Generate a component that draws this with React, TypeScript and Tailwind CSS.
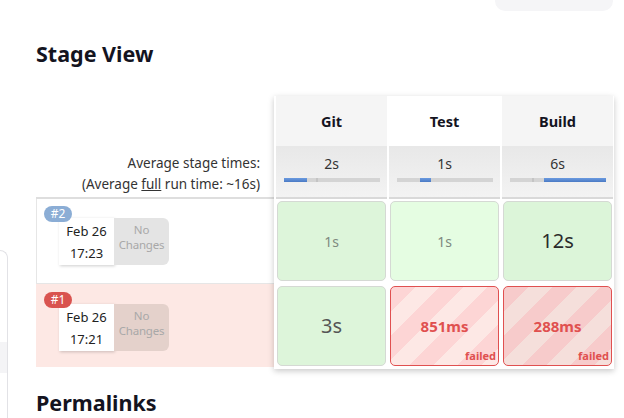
import React from "react";

const stageCols = [
  { name: "Git", avg: "2s", headerBg: "bg-[#f5f5f5]", track: { fill: [0, 23], tick: 32 } },
  { name: "Test", avg: "1s", headerBg: "bg-white", track: { fill: [23, 34], tick: -1 } },
  { name: "Build", avg: "6s", headerBg: "bg-[#f5f5f5]", track: { fill: [34, 96], tick: 22 } },
];

function Bar({ fill, tick }: { fill: number[]; tick: number }) {
  return (
    <div className="relative mx-auto mt-[4px] h-[4px] w-[96px] bg-[#d4d4d4]">
      {tick >= 0 && (
        <div className="absolute top-0 h-[4px] w-[2px] bg-[#c4c4c4]" style={{ left: tick }} />
      )}
      <div
        className="absolute top-0 h-[4px] bg-linear-to-b from-[#6b9be0] to-[#4a7ac4]"
        style={{ left: fill[0], width: fill[1] - fill[0] }}
      />
    </div>
  );
}

function RunLabel({ num, time, badge, changesBg }: { num: string; time: string; badge: string; changesBg: string }) {
  return (
    <div>
      <div className={`relative z-10 flex h-[16px] w-[28px] items-center justify-center rounded-full ${badge} text-[12px] leading-none text-white`}>
        {num}
      </div>
      <div className="-mt-[4px] ml-[15px] flex">
        <div className="flex h-[47px] w-[55px] flex-col justify-center bg-white text-center text-[13px] leading-[22px] text-[#222] shadow-[1px_1px_3px_rgba(0,0,0,0.2)]">
          <div>Feb 26</div>
          <div>{time}</div>
        </div>
        <div className={`h-[47px] w-[55px] rounded-r-[6px] ${changesBg} pt-[4px] text-center text-[11.5px] leading-[15px] tracking-[-0.2px] text-[#a8a8a8]`}>
          <div>No</div>
          <div>Changes</div>
        </div>
      </div>
    </div>
  );
}

const stripeA = "bg-[image:repeating-linear-gradient(135deg,#fdd5d5_0px,#fdd5d5_17px,#fde8e5_17px,#fde8e5_34px)]";
const stripeB = "bg-[image:repeating-linear-gradient(135deg,#f7cbcb_0px,#f7cbcb_17px,#f5dfdb_17px,#f5dfdb_34px)]";

function OkCell({ bg, text, big, color }: { bg: string; text: string; big?: boolean; color: string }) {
  return (
    <div className={`mx-[1px] flex h-[80px] items-center justify-center rounded-[5px] border border-[#d5d9d4] ${bg}`}>
      <span className={`${big ? "text-[20px]" : "text-[14px]"} ${color}`}>{text}</span>
    </div>
  );
}

function FailCell({ stripe, text }: { stripe: string; text: string }) {
  return (
    <div className={`relative mx-[1px] flex h-[80px] items-center justify-center rounded-[5px] border border-[#e05050] ${stripe}`}>
      <span className="text-[15px] font-bold text-[#e0504f]">{text}</span>
      <span className="absolute right-[2px] bottom-[3px] text-[11px] leading-[13px] font-bold text-[#e0504f]">failed</span>
    </div>
  );
}

export default function App() {
  return (
    <div className="font-['Noto_Sans',sans-serif] text-[#1a1a1a]">
      <div className="flex h-[418px] w-[624px] overflow-hidden bg-white">
        <aside className="w-[8px] shrink-0 pt-[250px]">
          <div className="h-full rounded-tr-[10px] border-t border-r border-[#e2e2e6]">
            <div className="mt-[91px] h-[31px] bg-[#f4f4f6]" />
          </div>
        </aside>
        <main className="flex-1 pl-[28px]">
          <div className="flex justify-end pr-[11px]">
            <div className="h-[11px] w-[118px] rounded-b-[10px] bg-[#f5f5f7]" />
          </div>
          <h2 className="mt-[29px] text-[21.5px] leading-[28px] font-bold text-[#14141f]">Stage View</h2>
          <div className="mt-[28px] flex">
            {/* left label column */}
            <div className="w-[238px] shrink-0">
              <div className="h-[50px]" />
              <div className="h-[53px] border-b-2 border-[#dedede] pt-[7px] pr-[14px] text-right text-[13.5px] leading-[21px] text-[#333]">
                <div>Average stage times:</div>
                <div>
                  (Average <span className="underline">full</span> run time: ~16s)
                </div>
              </div>
              <div className="h-[85px] border-b border-l border-[#e6e6e6] pt-[7px] pl-[7px]">
                <RunLabel num="#2" time="17:23" badge="bg-[#8badd5]" changesBg="bg-[#e4e4e4]" />
              </div>
              <div className="h-[83px] bg-[#fde8e4] pt-[8px] pl-[8px]">
                <RunLabel num="#1" time="17:21" badge="bg-[#d9534f]" changesBg="bg-[#e4d1cb]" />
              </div>
            </div>
            {/* stage box */}
            <div className="w-[340px] shrink-0 bg-white pr-[1px] pl-[2px] shadow-[0_2px_6px_rgba(0,0,0,0.22)]">
              <div className="flex gap-[2px]">
                {stageCols.map((c) => (
                  <div key={c.name} className="w-[111px]">
                    <div className={`flex h-[50px] items-center justify-center ${c.headerBg} pt-[1px] text-[14.5px] font-bold text-[#14141f]`}>
                      {c.name}
                    </div>
                    <div className="h-[53px] border-b-2 border-[#d9d9d9] bg-linear-to-b from-[#e8e8e8] to-[#f3f3f3] pt-[7px] text-center text-[14px] leading-[21px] text-[#333]">
                      <div>{c.avg}</div>
                      <Bar fill={c.track.fill} tick={c.track.tick} />
                    </div>
                  </div>
                ))}
              </div>
              <div className="flex h-[85px] gap-[2px] pt-[2px]">
                <div className="w-[111px]">
                  <OkCell bg="bg-[#ddf5da]" text="1s" color="text-[#7f8a7f]" />
                </div>
                <div className="w-[111px]">
                  <OkCell bg="bg-[#e5fde2]" text="1s" color="text-[#7f8a7f]" />
                </div>
                <div className="w-[111px]">
                  <OkCell bg="bg-[#dcf5d9]" text="12s" big color="text-[#2a2a2a]" />
                </div>
              </div>
              <div className="flex h-[85px] gap-[2px] pt-[2px]">
                <div className="w-[111px]">
                  <OkCell bg="bg-[#ddf5da]" text="3s" big color="text-[#555]" />
                </div>
                <div className="w-[111px]">
                  <FailCell stripe={stripeA} text="851ms" />
                </div>
                <div className="w-[111px]">
                  <FailCell stripe={stripeB} text="288ms" />
                </div>
              </div>
            </div>
          </div>
          <h2 className="mt-[20px] text-[21.5px] leading-[28px] font-bold text-[#14141f]">Permalinks</h2>
        </main>
      </div>
    </div>
  );
}
